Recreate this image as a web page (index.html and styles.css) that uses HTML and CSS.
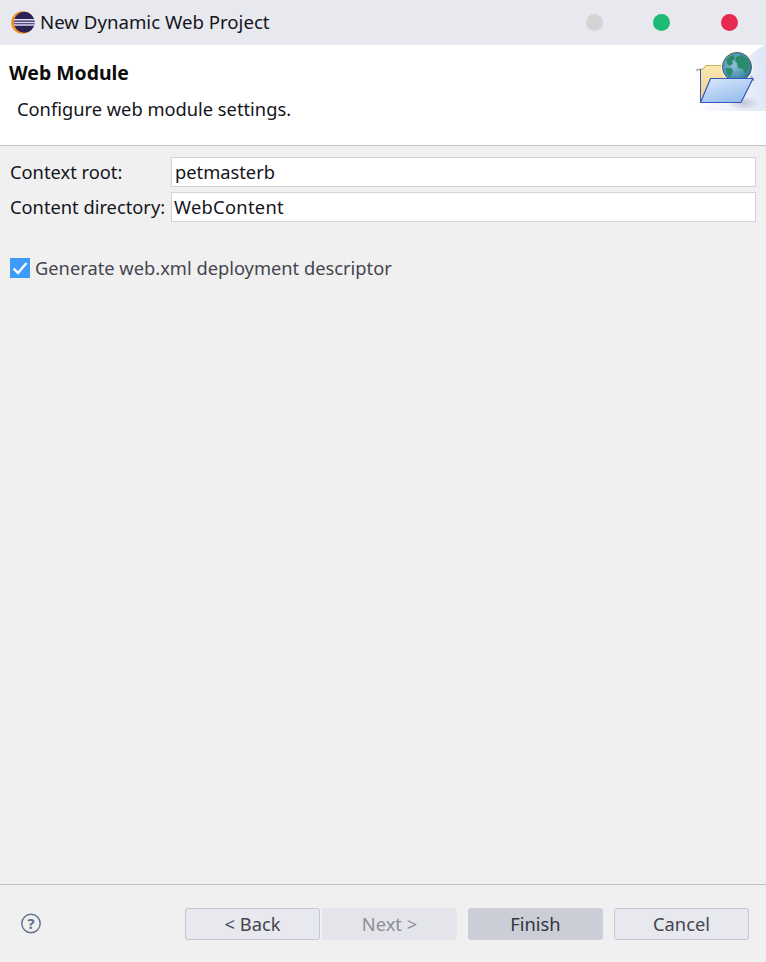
FILE: index.html
```html
<!DOCTYPE html>
<html lang="en">
<head>
<meta charset="utf-8">
<title>New Dynamic Web Project</title>
<link rel="stylesheet" href="styles.css">
</head>
<body>
<div class="window">
  <header class="titlebar">
    <svg class="app-icon" width="26" height="26" viewBox="0 0 26 26">
      <circle cx="12.500" cy="12.500" r="11.300" fill="#f08f24"/>
      <circle cx="14.300" cy="12.300" r="10.500" fill="#2c2255"/>
      <path d="M4 9.800h20.500M3.900 12.400h20.900M4 15h20.500" stroke="#dcd9ec" stroke-width="1.500"/>
    </svg>
    <span class="title">New Dynamic Web Project</span>
    <div class="controls">
      <span class="dot dot-min"></span>
      <span class="dot dot-max"></span>
      <span class="dot dot-close"></span>
    </div>
  </header>
  <section class="banner">
    <div class="banner-text">
      <h1 class="banner-title">Web Module</h1>
      <p class="banner-desc">Configure web module settings.</p>
    </div>
    <div class="banner-art">
      <svg width="76" height="66" viewBox="0 0 76 66">
        <defs>
          <linearGradient id="bg" x1="0" y1="0.6" x2="1" y2="0.5">
            <stop offset="0" stop-color="#ffffff"/>
            <stop offset="1" stop-color="#e0e6f6"/>
          </linearGradient>
          <linearGradient id="front" x1="0" y1="0" x2="0.6" y2="1">
            <stop offset="0" stop-color="#dbe9fb"/>
            <stop offset="1" stop-color="#98bfec"/>
          </linearGradient>
          <linearGradient id="back" x1="0" y1="0" x2="0" y2="1">
            <stop offset="0" stop-color="#fbe9b4"/>
            <stop offset="1" stop-color="#eccf84"/>
          </linearGradient>
          <radialGradient id="globe" cx="0.4" cy="0.42" r="0.7">
            <stop offset="0" stop-color="#8fc4d6"/>
            <stop offset="0.6" stop-color="#4f93b2"/>
            <stop offset="1" stop-color="#266a90"/>
          </radialGradient>
          <radialGradient id="shadow" cx="0.5" cy="0.5" r="0.5">
            <stop offset="0" stop-color="#b8bcc8" stop-opacity="0.8"/>
            <stop offset="1" stop-color="#b8bcc8" stop-opacity="0"/>
          </radialGradient>
        </defs>
        <path d="M76 0C66 4 56 12 48 28C40 44 24 60 0 66H76Z" fill="url(#bg)"/>
        <ellipse cx="54" cy="58" rx="16" ry="7" fill="url(#shadow)"/>
        <path d="M6 25.500L8 24.500H14M61 31l3 5" stroke="#a5a8ae" stroke-width="1.500" fill="none"/>
        <path d="M10.500 57V24.500l3-.500 2-3.500H36a3 3 0 0 1 3 3V42L14 57Z" fill="url(#back)" stroke="#d0ae5c" stroke-width="1"/>
        <path d="M10.500 24V57.500" stroke="#3a55b8" stroke-width="1"/>
        <circle cx="47" cy="22" r="16" fill="#fdf8e2"/>
        <circle cx="47" cy="22" r="14.500" fill="url(#globe)" stroke="#3d5f78" stroke-width="1"/>
        <path d="M36 15l4-4 4-1 1 4-3 2 1 3-4 2-2-3Z" fill="#2a8a6a"/>
        <path d="M36 23l5 0 2 3-2 4-2 2-3-5Z" fill="#2a8a6a"/>
        <path d="M46 12l5-2 5 3 3 6-1 7-3 2-2-4-5-1-1-5-2-2Z" fill="#2a8a6a"/>
        <path d="M20.500 33.500H63L51 57.500H10.500Z" fill="url(#front)" stroke="#3655bb" stroke-width="1.200" stroke-linejoin="round"/>
      </svg>
    </div>
  </section>
  <main class="content">
    <div class="form-grid">
      <label class="field-label">Context root:</label>
      <div class="input input-wide">petmasterb</div>
      <label class="field-label">Content directory:</label>
      <div class="input input-spaced">WebContent</div>
    </div>
    <div class="check-row">
      <span class="checkbox">
        <svg width="20" height="20" viewBox="0 0 20 20"><path d="M3.500 10.500l4.500 4.500 8.500-10" fill="none" stroke="#fff" stroke-width="2.400"/></svg>
      </span>
      <span class="check-label">Generate web.xml deployment descriptor</span>
    </div>
  </main>
  <footer class="footer">
    <svg class="help" width="21" height="21" viewBox="0 0 21 21">
      <circle cx="10" cy="10.500" r="9.200" fill="none" stroke="#5f6f8c" stroke-width="1.400"/>
      <text class="help-mark" x="10" y="15.500" text-anchor="middle">?</text>
    </svg>
    <div class="buttons">
      <div class="btn">&lt; Back</div>
      <div class="btn btn-disabled">Next &gt;</div>
      <div class="btn btn-default">Finish</div>
      <div class="btn btn-cancel">Cancel</div>
    </div>
  </footer>
</div>
</body>
</html>
```

FILE: styles.css
```css
* { box-sizing: border-box; }
html, body { margin: 0; padding: 0; }
body {
  width: 766px;
  height: 962px;
  overflow: hidden;
  background: #f0f0f0;
  font-family: "Noto Sans", "Open Sans", sans-serif;
  font-size: 18.3px;
  color: #111;
}
.window { display: flex; flex-direction: column; height: 962px; }
.titlebar {
  height: 45px;
  background: #e8e9ee;
  display: flex;
  align-items: center;
  padding-left: 10px;
}
.app-icon { flex: none; }
.title { margin-left: 4px; padding-bottom: 3px; font-size: 18.65px; color: #14141c; }
.controls { margin-left: auto; display: flex; gap: 50px; padding-right: 28px; }
.dot { width: 17px; height: 17px; border-radius: 50%; }
.dot-min { background: #d4d4d4; }
.dot-max { background: #1cba73; }
.dot-close { margin-left: 1px; background: #e8294f; }
.banner {
  height: 101px;
  background: #fff;
  border-bottom: 1px solid #c2c0c9;
  display: flex;
  justify-content: space-between;
}
.banner-text { padding: 15px 0 0 9px; }
.banner-title { margin: 0; font-size: 19.4px; line-height: 25px; font-weight: 700; color: #0c0c0c; }
.banner-desc { margin: 11px 0 0 8px; line-height: 25px; color: #14141c; }
.banner-art { height: 66px; line-height: 0; }
.content { flex: 1; padding: 11px 10px 0; }
.form-grid {
  display: grid;
  grid-template-columns: 161px 1fr;
  row-gap: 5px;
  align-items: center;
}
.field-label { padding-bottom: 2px; line-height: 25px; color: #14141c; white-space: nowrap; }
.input {
  height: 30px;
  background: #fff;
  border: 1px solid #d0d3de;
  padding-left: 2px;
  line-height: 27px;
  color: #14141c;
}
.input-wide { padding-left: 3px; }
.input-spaced { letter-spacing: 0.3px; }
.check-row { display: flex; align-items: center; margin-top: 36px; }
.checkbox {
  width: 20px;
  height: 20px;
  background: #3d9bfb;
  line-height: 0;
}
.check-label { margin-left: 5px; line-height: 20px; color: #44454f; }
.footer {
  height: 78px;
  border-top: 1px solid #c2c0c9;
  display: flex;
  align-items: flex-start;
  justify-content: space-between;
  padding: 23px 17px 0 21px;
}
.help { margin-top: 5px; }
.help-mark { font-size: 15px; font-weight: 700; fill: #5f6f8c; font-family: "Noto Sans", sans-serif; }
.buttons { display: flex; }
.btn {
  width: 135px;
  height: 32px;
  margin-left: 2px;
  border: 1px solid #c3c7d3;
  border-radius: 3px;
  background: #e8e9ee;
  text-align: center;
  line-height: 30px;
  color: #44454f;
}
.btn-disabled { border-color: #e4e5ea; background: #e4e5ea; color: #8e8f99; }
.btn-default { margin-left: 11px; border-color: #cbced7; background: #cbced7; color: #33343c; }
.btn-cancel { margin-left: 11px; }
```
